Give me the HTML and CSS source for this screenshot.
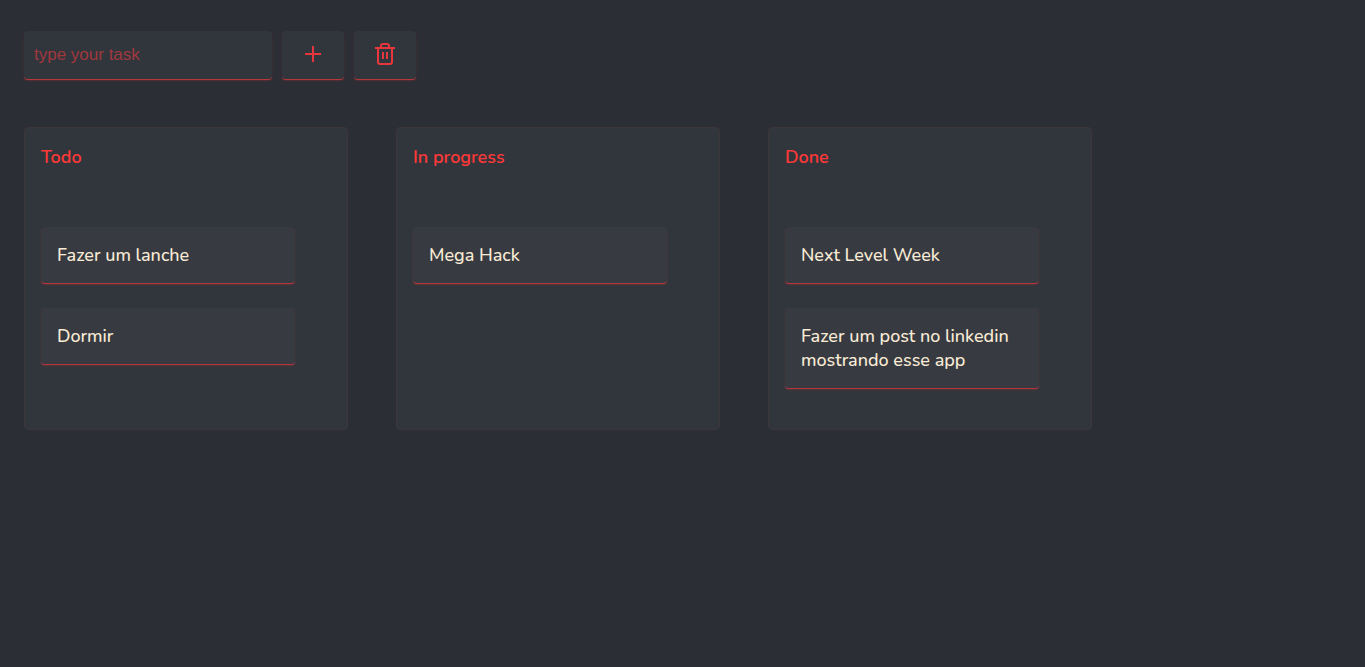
FILE: index.html
```html
<!DOCTYPE html>
<html lang="en">
<head>
<meta charset="utf-8">
<title>Tasks</title>
<link rel="stylesheet" href="styles.css">
</head>
<body>
<form class="toolbar">
  <input class="task-input" type="text" placeholder="type your task" aria-label="Task">
  <button class="action" type="button" aria-label="Add task">
    <svg width="24" height="24" viewBox="0 0 24 24"><path d="M12 4v16M4 12h16"/></svg>
  </button>
  <button class="action" type="button" aria-label="Delete tasks">
    <svg width="24" height="24" viewBox="0 0 24 24"><path d="M2 6h20M5 6v14q0 2 2 2h10q2 0 2-2V6M8 6V4q0-2 2-2h4q2 0 2 2v2M10 10v7M14 10v7"/></svg>
  </button>
</form>
<main class="board">
  <section class="column">
    <h2 class="column-title">Todo</h2>
    <ul class="cards">
      <li class="card">Fazer um lanche</li>
      <li class="card">Dormir</li>
    </ul>
  </section>
  <section class="column">
    <h2 class="column-title">In progress</h2>
    <ul class="cards">
      <li class="card">Mega Hack</li>
    </ul>
  </section>
  <section class="column">
    <h2 class="column-title">Done</h2>
    <ul class="cards">
      <li class="card">Next Level Week</li>
      <li class="card">Fazer um post no linkedin mostrando esse app</li>
    </ul>
  </section>
</main>
</body>
</html>
```
FILE: styles.css
```css
* { box-sizing: border-box; }

body {
  margin: 0;
  padding: 31px 24px;
  background: #2c2e35;
  color: #faebd7;
  font: 500 18px/24px Nunito, "Noto Sans", sans-serif;
}

.toolbar {
  display: flex;
  gap: 10px;
  margin-bottom: 47px;
}

.task-input,
.action {
  height: 49px;
  border: 0;
  border-bottom: 1px solid #b4373c;
  border-radius: 4px;
  background: #31363c;
  box-shadow: 0 1px 2px rgba(255, 56, 56, 0.2);
}

.task-input {
  width: 248px;
  padding: 0 10px;
  color: #ff3838;
  font: 17px "Liberation Sans", Arial, sans-serif;
}

.task-input::placeholder {
  color: #a0383e;
  opacity: 1;
}

.action {
  display: grid;
  place-items: center;
  width: 62px;
  padding: 0 0 2px;
}

.action svg {
  fill: none;
  stroke: #e6383c;
  stroke-width: 2;
}

.board {
  display: flex;
  align-items: stretch;
  gap: 48px;
}

.column {
  flex: 0 1 324px;
  padding: 17px 16px 40px;
  border: 1px solid #3c363b;
  border-radius: 4px;
  background: #31363c;
}

.column-title {
  margin: 0 0 58px;
  color: #ff3838;
  font-size: 18px;
  font-weight: 600;
}

.cards {
  display: grid;
  gap: 24px;
  margin: 0;
  padding: 0;
  list-style: none;
}

.card {
  max-width: 254px;
  padding: 16px;
  border-bottom: 1px solid #b4373c;
  border-radius: 4px;
  background: #373b41;
  box-shadow: 0 1px 2px rgba(255, 56, 56, 0.2);
}
```
